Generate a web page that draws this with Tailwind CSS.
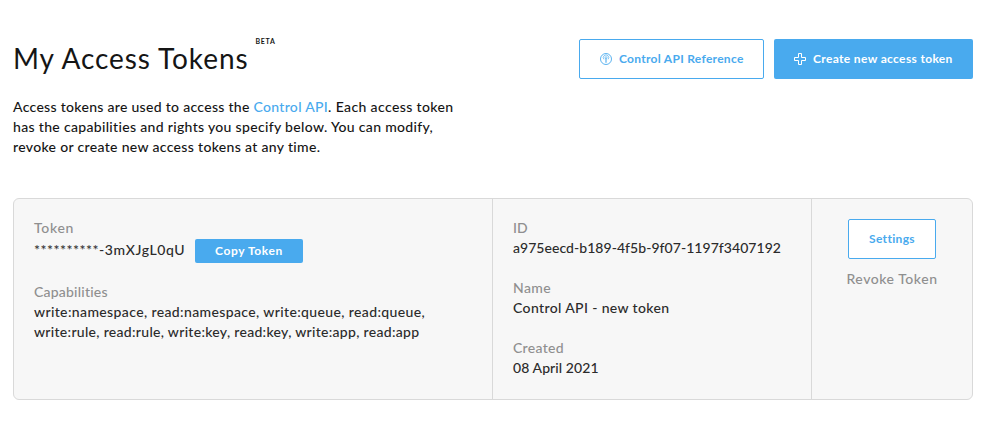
<!DOCTYPE html>
<html lang="en">
<head>
<meta charset="utf-8">
<title>My Access Tokens</title>
<script src="https://cdn.jsdelivr.net/npm/@tailwindcss/browser@4"></script>
</head>
<body class="bg-white font-['Lato',sans-serif] text-[14px] leading-5 font-medium text-[#151515]">
<main class="w-[994px] h-[427px] pl-[13px] pr-[21px] pt-[39px] whitespace-nowrap">
  <header class="flex justify-between h-[58px]">
    <div class="flex items-start">
      <h1 class="text-[28px] leading-[38px] font-normal tracking-[0.92px]">My Access Tokens</h1>
      <span class="ml-[7px] -mt-[2px] text-[7px] leading-[9px] font-bold tracking-[0.7px]">BETA</span>
    </div>
    <div class="flex gap-[10px] text-[12px] font-bold">
      <button class="w-[185px] h-10 flex items-center pl-5 rounded-[2px] border border-[#49aaee] text-[#49aaee]">
        <svg class="size-3 mr-[7px] shrink-0" viewBox="0 0 12 12" fill="none" stroke="currentColor">
          <circle cx="6" cy="6" r="5.5" stroke-width=".9"/>
          <path d="M3.9 6.3A2.7 2.7 0 1 1 8.1 6.3" stroke-width=".7"/>
          <circle cx="6" cy="4.7" r="1" stroke-width=".7"/>
          <path d="M6 5.8V9.8" stroke-width="1.1"/>
        </svg>
        <span class="tracking-[0.289px]">Control API Reference</span>
      </button>
      <button class="w-[199px] h-10 flex items-center pl-5 rounded-[2px] bg-[#49aaee] text-white">
        <svg class="size-3 mr-[7px] shrink-0" viewBox="0 0 12 12" fill="none" stroke="currentColor">
          <path d="M4.5 .5h3v4h4v3h-4v4h-3v-4h-4v-3h4z"/>
        </svg>
        <span class="tracking-[0.351px]">Create new access token</span>
      </button>
    </div>
  </header>

  <div class="h-[101px]">
    <p class="tracking-[0.3px]">Access tokens are used to access the <a class="text-[#49aaee]">Control API</a><span class="tracking-[0.38px]">. Each access token</span></p>
    <p class="tracking-[0.325px]">has the capabilities and rights you specify below. You can modify,</p>
    <p class="tracking-[0.33px]">revoke or create new access tokens at any time.</p>
  </div>

  <section class="flex h-[202px] rounded-[6px] border border-[#d9d9d9] bg-[#f7f7f7] text-[#2b2b2b]">
    <div class="w-[479px] border-r border-[#d9d9d9] pl-5 pt-[19px]">
      <div class="tracking-[0.675px] text-[#8f8f8f]">Token</div>
      <div class="flex items-end h-[25px]">
        <span class="leading-6 pb-px tracking-[0.55px]">**********</span><span class="w-[96px] leading-6 pb-px tracking-[0.62px]">-3mXJgL0qU</span>
        <button class="w-[108px] h-6 rounded-[2px] bg-[#49aaee] text-white text-[12px] font-bold tracking-[0.598px]">Copy Token</button>
      </div>
      <div class="mt-[19px] tracking-[0.213px] text-[#8f8f8f]">Capabilities</div>
      <p class="tracking-[0.375px]">write:namespace, read:namespace, write:queue, read:queue,</p>
      <p class="tracking-[0.304px]">write:rule, read:rule, write:key, read:key, write:app, read:app</p>
    </div>
    <dl class="w-[319px] border-r border-[#d9d9d9] pl-5 pt-[19px]">
      <dt class="text-[#8f8f8f]">ID</dt>
      <dd class="mb-5 tracking-[0.047px]">a975eecd-b189-4f5b-9f07-1197f3407192</dd>
      <dt class="tracking-[0.377px] text-[#8f8f8f]">Name</dt>
      <dd class="mb-5 tracking-[0.37px]">Control API - new token</dd>
      <dt class="tracking-[0.317px] text-[#8f8f8f]">Created</dt>
      <dd class="tracking-[0.08px]">08 April 2021</dd>
    </dl>
    <div class="flex-1 flex flex-col items-center gap-[10px] pt-5">
      <button class="w-[88px] h-10 rounded-[2px] border border-[#49aaee] bg-white text-[#49aaee] text-[12px] font-bold tracking-[0.329px]">Settings</button>
      <span class="tracking-[0.539px] text-[#8f8f8f]">Revoke Token</span>
    </div>
  </section>
</main>
</body>
</html>
